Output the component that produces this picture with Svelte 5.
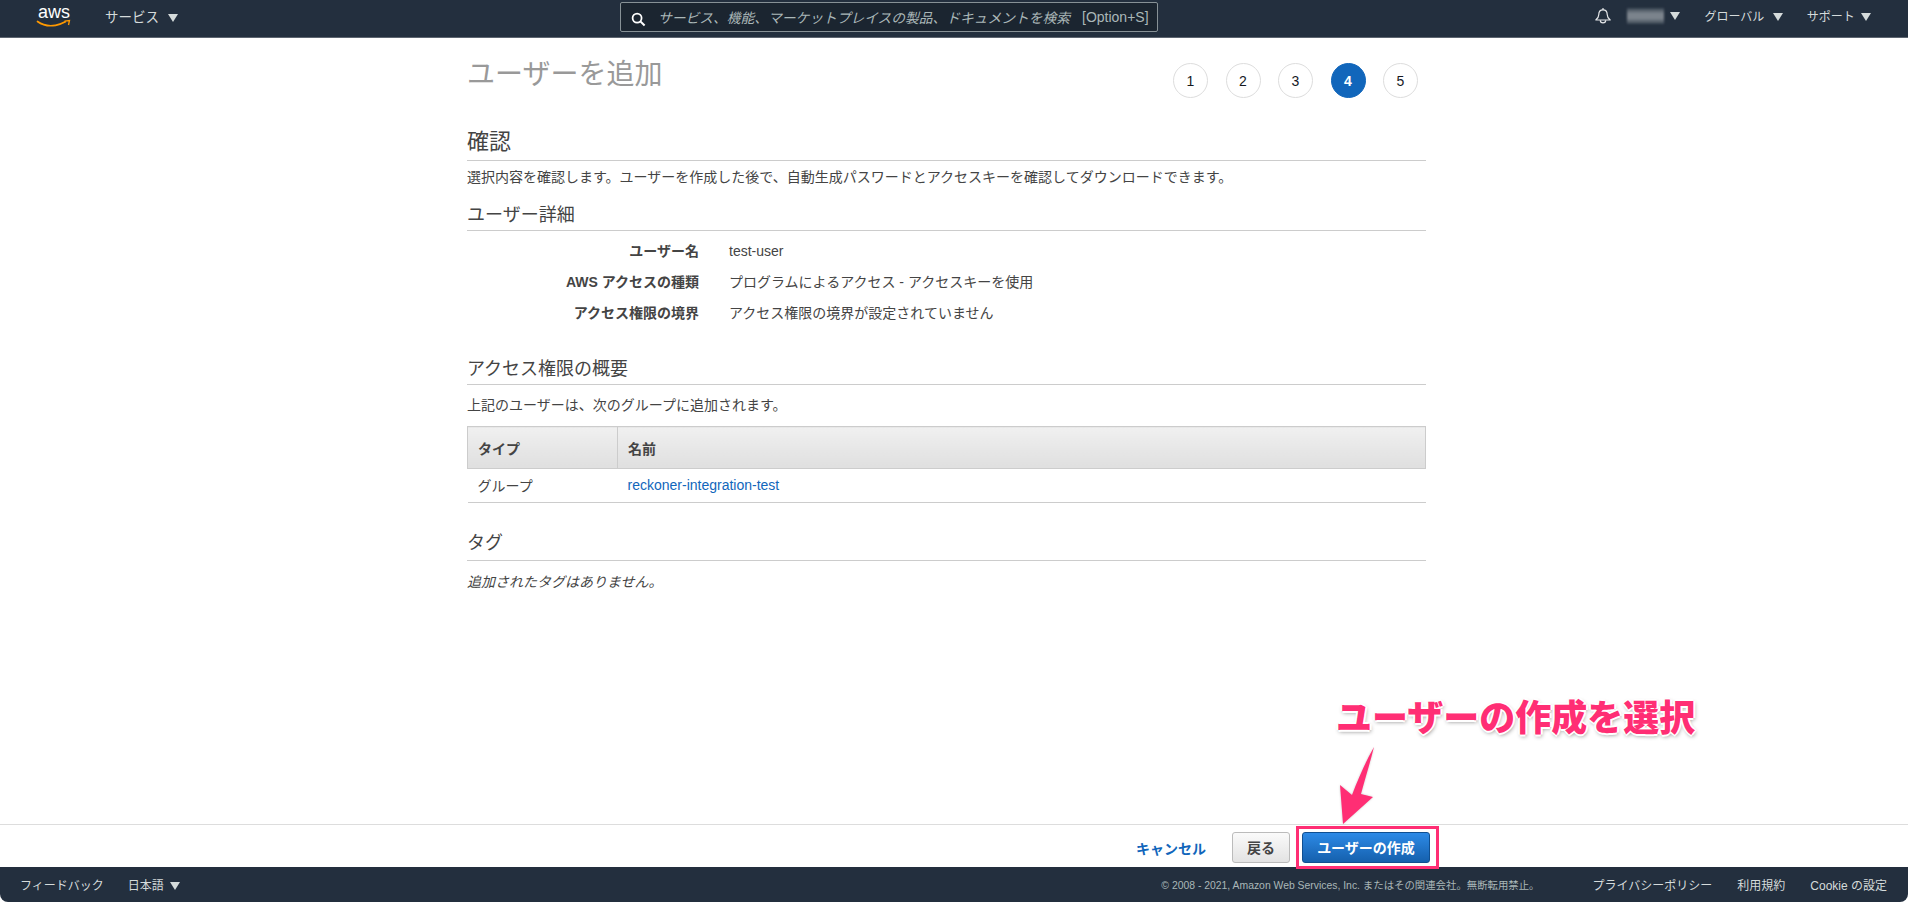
<script>
  const steps = [1, 2, 3, 4, 5];
  const details = [
    ["ユーザー名", "test-user"],
    ["AWS アクセスの種類", "プログラムによるアクセス - アクセスキーを使用"],
    ["アクセス権限の境界", "アクセス権限の境界が設定されていません"],
  ];
</script>

<div class="page">
  <header class="nav">
    <div class="nav-left">
      <svg class="logo" viewBox="0 0 36 32" width="36" height="32">
        <text x="2" y="17" class="aws">aws</text>
        <path d="M1.500 20.500c5 3.600 11.500 5 18 3.800 3.500-.7 7-1.900 9.800-3.500" fill="none" stroke="#f90" stroke-width="1.700" stroke-linecap="round" />
        <path d="M28.500 20.200l5-.7-1 4.500" fill="none" stroke="#f90" stroke-width="1.300" />
      </svg>
      <span class="nav-item services">サービス <i class="caret"></i></span>
    </div>
    <div class="search">
      <svg class="search-icon" viewBox="0 0 16 16" width="15" height="15">
        <circle cx="6.500" cy="6.500" r="4.800" fill="none" stroke="#fff" stroke-width="1.900" />
        <path d="M10 10l4.500 4.500" stroke="#fff" stroke-width="2.200" />
      </svg>
      <span class="placeholder">サービス、機能、マーケットプレイスの製品、ドキュメントを検索</span>
      <span class="shortcut">[Option+S]</span>
    </div>
    <div class="nav-right">
      <svg class="bell" viewBox="0 0 18 18" width="18" height="18">
        <path d="M9 2.800c-2.800 0-4.200 2.200-4.200 4.800 0 2.400-1 3.800-3 5.400h14.400c-2-1.600-3-3-3-5.400 0-2.600-1.400-4.800-4.200-4.800z" fill="none" stroke="#e6e8ea" stroke-width="1.200" stroke-linejoin="round" />
        <path d="M6.300 13.200a2.700 2.700 0 0 0 5.400 0" fill="none" stroke="#e6e8ea" stroke-width="1.200" />
        <path d="M9 1v2" stroke="#e6e8ea" stroke-width="1.200" />
      </svg>
      <span class="blur"></span>
      <i class="caret user-caret"></i>
      <span class="nav-item global">グローバル <i class="caret"></i></span>
      <span class="nav-item support">サポート <i class="caret"></i></span>
    </div>
  </header>

  <main class="content">
    <div class="title-row">
      <h1>ユーザーを追加</h1>
      <ol class="steps">
        {#each steps as step}
          <li class:active={step === 4}>{step}</li>
        {/each}
      </ol>
    </div>

    <h2 class="first">確認</h2>
    <p class="intro">選択内容を確認します。ユーザーを作成した後で、自動生成パスワードとアクセスキーを確認してダウンロードできます。</p>

    <h3 class="detail-head">ユーザー詳細</h3>
    <dl class="details">
      {#each details as row}
        <dt>{row[0]}</dt>
        <dd>{row[1]}</dd>
      {/each}
    </dl>

    <h3 class="perm-head">アクセス権限の概要</h3>
    <p class="perm-note">上記のユーザーは、次のグループに追加されます。</p>
    <table>
      <thead>
        <tr><th class="col-type">タイプ</th><th>名前</th></tr>
      </thead>
      <tbody>
        <tr><td>グループ</td><td><a href="#top">reckoner-integration-test</a></td></tr>
      </tbody>
    </table>

    <h3 class="tag-head">タグ</h3>
    <p class="tag-note">追加されたタグはありません。</p>
  </main>

  <div class="actions">
    <a class="cancel" href="#top">キャンセル</a>
    <button class="back">戻る</button>
    <div class="highlight">
      <button class="create">ユーザーの作成</button>
    </div>
    <div class="callout">ユーザーの作成を選択</div>
    <svg class="arrow" viewBox="0 0 44 84" width="44" height="84">
      <path d="M36 0 C32 16 27 32 23 47 L35 50 L5 77 L2 38 L14 48 C20 32 28 14 36 0 Z" fill="#ff2e74" />
    </svg>
  </div>

  <footer class="foot">
    <div class="foot-left">
      <span>フィードバック</span>
      <span class="lang">日本語 <i class="caret"></i></span>
    </div>
    <div class="foot-right">
      <span class="copy">© 2008 - 2021, Amazon Web Services, Inc. またはその関連会社。無断転用禁止。</span>
      <span>プライバシーポリシー</span>
      <span>利用規約</span>
      <span>Cookie の設定</span>
    </div>
  </footer>
</div>

<style>
  :global(body) {
    margin: 0;
    background: #fff;
  }

  .page {
    height: 902px;
    display: flex;
    flex-direction: column;
    font-family: "Liberation Sans", "Noto Sans CJK JP", sans-serif;
    font-size: 14px;
    color: #444;
    overflow: hidden;
    position: relative;
  }

  .nav {
    height: 34px;
    padding-bottom: 3px;
    flex: none;
    background: #232f3e;
    border-bottom: 1px solid #5d6570;
    display: flex;
    align-items: center;
    color: #d5dbdb;
    font-size: 13px;
    position: relative;
  }

  .nav-left {
    width: 620px;
    flex: none;
    display: flex;
    align-items: center;
  }

  .logo {
    margin-left: 36px;
    flex: none;
  }

  .aws {
    font-size: 18px;
    fill: #fff;
    font-family: "Liberation Sans", sans-serif;
  }

  .services {
    margin-left: 33px;
    font-size: 13.500px;
  }

  .services .caret {
    margin-left: 5px;
  }

  .nav-item {
    white-space: nowrap;
    margin-bottom: 3px;
  }

  .caret {
    display: inline-block;
    width: 0;
    height: 0;
    border-left: 5px solid transparent;
    border-right: 5px solid transparent;
    border-top: 8px solid #d5dbdb;
    margin-left: 3px;
  }

  .search {
    width: 536px;
    height: 28px;
    border: 1px solid #879196;
    border-radius: 2px;
    background: #1b2530;
    display: flex;
    align-items: center;
    box-sizing: content-box;
    position: relative;
  }

  .search-icon {
    margin-left: 10px;
    flex: none;
    margin-top: 4px;
  }

  .placeholder {
    margin-left: 12px;
    width: 414px;
    font-size: 13.750px;
    font-style: italic;
    color: #aab7b8;
    white-space: nowrap;
    flex: none;
  }

  .shortcut {
    margin-left: 10px;
    font-size: 14px;
    color: #aab7b8;
    white-space: nowrap;
  }

  .nav-right {
    margin-left: auto;
    display: flex;
    align-items: center;
    padding-right: 37px;
  }

  .bell {
    margin-right: 15px;
    margin-bottom: 3px;
  }

  .blur {
    width: 37px;
    height: 16px;
    margin-bottom: 3px;
    background: linear-gradient(180deg, #3a4653 0, #7b838c 35%, #7b838c 65%, #3a4653 100%);
    filter: blur(1px);
  }

  .user-caret {
    margin-left: 6px;
    margin-bottom: 3px;
  }

  .global {
    margin-left: 24px;
    font-size: 12px;
  }

  .global .caret {
    margin-left: 5px;
  }

  .support {
    margin-left: 24px;
    font-size: 12px;
  }

  .content {
    flex: 1;
    width: 959px;
    margin-left: 467px;
    box-sizing: border-box;
  }

  .title-row {
    display: flex;
    justify-content: space-between;
    height: 89px;
  }

  h1 {
    margin: 20px 0 0;
    font-size: 28px;
    line-height: 34px;
    font-weight: 400;
    color: #999;
  }

  .steps {
    list-style: none;
    margin: 25px 8px 0 0;
    padding: 0;
    display: flex;
    gap: 17.500px;
  }

  .steps li {
    width: 35px;
    height: 35px;
    box-sizing: border-box;
    border: 1px solid #ddd;
    border-radius: 50%;
    display: flex;
    align-items: center;
    justify-content: center;
    color: #16191f;
    font-size: 14px;
  }

  .steps li.active {
    background: #1166bb;
    border-color: #1166bb;
    color: #fff;
    font-weight: 700;
  }

  h2, h3 {
    margin: 0;
    font-weight: 400;
    color: #444;
    border-bottom: 1px solid #ccc;
  }

  h2 {
    font-size: 22px;
    line-height: 30px;
  }

  h3 {
    font-size: 18px;
    line-height: 26px;
  }

  p {
    margin: 0;
    line-height: 20px;
  }

  .first {
    height: 33px;
  }

  .intro {
    margin-top: 6px;
  }

  .detail-head {
    margin-top: 15px;
    padding-bottom: 2px;
  }

  .details {
    display: grid;
    grid-template-columns: 232px 1fr;
    column-gap: 30px;
    row-gap: 11px;
    margin: 10px 0 0;
  }

  dt {
    font-weight: 700;
    text-align: right;
    line-height: 20px;
  }

  dd {
    margin: 0;
    line-height: 20px;
  }

  .perm-head {
    margin-top: 33px;
    padding-bottom: 2px;
  }

  .perm-note {
    margin-top: 10px;
  }

  table {
    width: 100%;
    margin-top: 11px;
    border-collapse: collapse;
  }

  th {
    height: 41px;
    padding: 0 10px;
    text-align: left;
    background: linear-gradient(#f0f0f0, #dfdfdf);
    border: 1px solid #ccc;
    font-size: 14px;
    color: #444;
  }

  .col-type {
    width: 129px;
  }

  td {
    height: 31px;
    padding: 0 10px 2px;
    border-bottom: 1px solid #ccc;
  }

  a {
    color: #1166bb;
    text-decoration: none;
  }

  .tag-head {
    margin-top: 27px;
    padding-bottom: 4px;
  }

  .tag-note {
    margin-top: 11px;
    font-style: italic;
  }

  .actions {
    height: 42px;
    flex: none;
    border-top: 1px solid #ddd;
    display: flex;
    align-items: center;
    position: relative;
    padding-left: 1136px;
  }

  .cancel {
    font-weight: 700;
    margin-right: 26px;
    margin-top: 3px;
    white-space: nowrap;
  }

  button {
    font-family: inherit;
    font-size: 14px;
    font-weight: 700;
    border-radius: 3px;
    height: 31px;
    padding: 0 0 2px;
  }

  .back {
    width: 58px;
    margin-top: 3px;
    background: linear-gradient(#fafafa, #e3e3e3);
    border: 1px solid #bbb;
    color: #444;
  }

  .highlight {
    margin-left: 6px;
    width: 137px;
    height: 37px;
    border: 3px solid #ff2e74;
    display: flex;
    align-items: center;
    position: relative;
    top: 1.500px;
    box-sizing: content-box;
  }

  .create {
    width: 128px;
    margin-left: 3px;
    background: linear-gradient(#2d8ae6, #1560ad);
    border: 1px solid #0f4f91;
    color: #fff;
  }

  .callout {
    position: absolute;
    left: 1336px;
    top: -128px;
    font-size: 36px;
    line-height: 44px;
    font-weight: 900;
    color: #ff2e74;
    white-space: nowrap;
    text-shadow: -2px 0 #fff, 2px 0 #fff, 0 -2px #fff, 0 2px #fff, 1px 2px 4px rgba(0, 0, 0, 0.45);
  }

  .arrow {
    position: absolute;
    left: 1338px;
    top: -78px;
    filter: drop-shadow(0 0 1px rgba(0, 0, 0, 0.2));
  }

  .foot {
    height: 35px;
    flex: none;
    background: #232f3e;
    border-radius: 0 0 8px 8px;
    display: flex;
    align-items: center;
    justify-content: space-between;
    color: #d5dbdb;
    font-size: 12px;
  }

  .foot-left {
    display: flex;
    align-items: center;
    gap: 24px;
    padding-left: 20px;
  }

  .foot-right {
    display: flex;
    align-items: center;
    gap: 25px;
    padding-right: 21px;
  }

  .copy {
    font-size: 10.400px;
    color: #aab7b8;
    margin-right: 28px;
  }
</style>
